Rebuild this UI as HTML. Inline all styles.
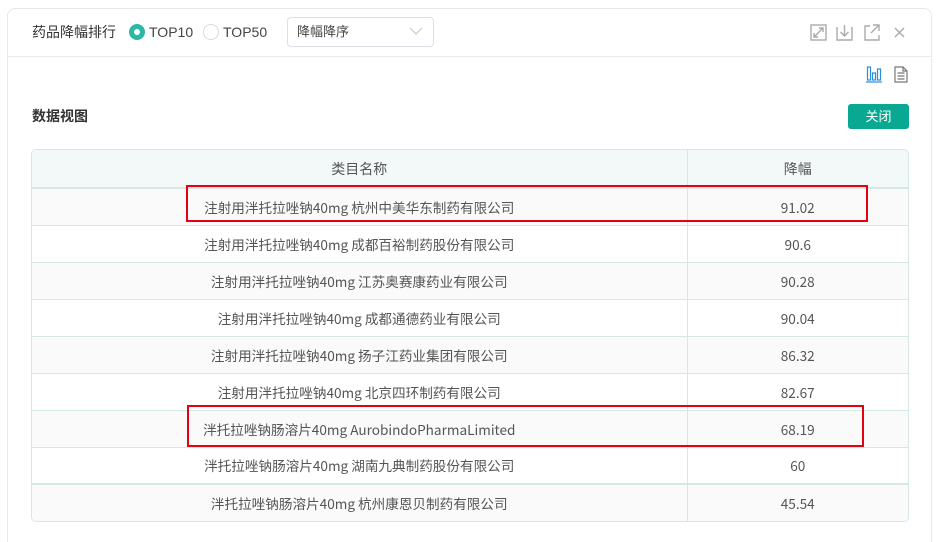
<!DOCTYPE html>
<html><head><meta charset="utf-8"><style>
*{margin:0;padding:0;box-sizing:border-box}
html,body{width:943px;height:542px;overflow:hidden}
body{background:#fff;font-family:"Liberation Sans","Noto Sans CJK SC",sans-serif;color:#555;position:relative}
.panel{position:absolute;left:7px;top:8px;width:925px;height:534px;border:1px solid #e6e8eb;border-bottom:none;border-radius:8px 8px 0 0;background:#fff}
.hdr{position:absolute;left:0;top:0;width:100%;height:48px;border-bottom:1px solid #e8eaec}
.abs{position:absolute}
.t{font-size:14px;color:#333;line-height:18px}
table{border-collapse:collapse;width:100%;font-size:13.6px;color:#555;font-family:"Noto Sans CJK SC",sans-serif}
.tbl{position:absolute;left:31px;top:149px;width:878px;border:1px solid #d5e8e4;border-radius:5px;overflow:hidden}
td,th{height:37px;padding:0;line-height:16px;text-align:center;vertical-align:middle;font-weight:normal;border-bottom:1px solid #d5e8e4}
th{background:#f3f8f8;font-size:14px;height:38px;border-bottom:2px solid #d5e8e4}
td:first-child,th:first-child{border-right:1px solid #d5e8e4;width:655px}
tr.g td{background:#fafafa}
tr.last td{border-bottom:none}
tr.thick td{border-bottom:2px solid #d5e8e4}
.red{position:absolute;border:2px solid #e60012}
</style></head><body>
<div class="panel"><div class="hdr"></div></div>
<div class="abs t" style="left:32px;top:23px">药品降幅排行</div>
<div class="abs" style="left:129px;top:24px;width:16px;height:16px;border-radius:50%;background:#2bb8a6"><div style="position:absolute;left:5px;top:5px;width:6px;height:6px;border-radius:50%;background:#fff"></div></div>
<div class="abs t" style="left:149px;top:23px;color:#444">TOP10</div>
<div class="abs" style="left:203px;top:24px;width:16px;height:16px;border-radius:50%;border:1px solid #d9d9d9"></div>
<div class="abs t" style="left:223px;top:23px;color:#444">TOP50</div>
<div class="abs" style="left:287px;top:17px;width:147px;height:30px;border:1px solid #dcdfe6;border-radius:4px"></div>
<div class="abs" style="left:297px;top:24px;font-size:13px;line-height:16px;color:#444">降幅降序</div>
<svg class="abs" style="left:409px;top:26px" width="14" height="10"><path d="M1 2l6 6 6-6" fill="none" stroke="#c0c4cc" stroke-width="1"/></svg>
<svg class="abs" style="left:810px;top:23px" width="100" height="18" fill="none" stroke="#aaa" stroke-width="1.4">
<rect x="1" y="2" width="15" height="15"/><path d="M4 14l9-9M4 10v4h4M13 9V5H9"/>
<path d="M28 5h-1v12h15V5h-1M34.5 2v11M30.5 9l4 4 4-4"/>
<path d="M60 3h-5v14h14v-5M63 2h6v6M69 2l-8 8"/>
<path d="M85 5l9 9M94 5l-9 9"/>
</svg>
<svg class="abs" style="left:866px;top:65px" width="16" height="18" fill="none" stroke="#2d8cd8" stroke-width="1.2"><rect x="1.5" y="2" width="3" height="13"/><rect x="6.5" y="8" width="3" height="7"/><rect x="11.5" y="4" width="3" height="11"/><path d="M0 17h16"/></svg>
<svg class="abs" style="left:893px;top:66px" width="16" height="17" fill="none" stroke="#777" stroke-width="1.2"><path d="M2 1h8l4 4v11H2z M10 1v4h4 M4.5 7h7M4.5 10h7M4.5 13h7"/></svg>
<div class="abs" style="left:32px;top:107px;font-size:14px;line-height:18px;font-weight:bold;color:#333">数据视图</div>
<div class="abs" style="left:848px;top:104px;width:61px;height:25px;background:#08a892;border-radius:3px;color:#fff;font-size:13px;text-align:center;line-height:25px">关闭</div>
<div class="tbl"><table>
<tr><th>类目名称</th><th>降幅</th></tr>
<tr class="g"><td>注射用泮托拉唑钠40mg 杭州中美华东制药有限公司</td><td>91.02</td></tr>
<tr><td>注射用泮托拉唑钠40mg 成都百裕制药股份有限公司</td><td>90.6</td></tr>
<tr class="g"><td>注射用泮托拉唑钠40mg 江苏奥赛康药业有限公司</td><td>90.28</td></tr>
<tr><td>注射用泮托拉唑钠40mg 成都通德药业有限公司</td><td>90.04</td></tr>
<tr class="g"><td>注射用泮托拉唑钠40mg 扬子江药业集团有限公司</td><td>86.32</td></tr>
<tr><td>注射用泮托拉唑钠40mg 北京四环制药有限公司</td><td>82.67</td></tr>
<tr class="g"><td>泮托拉唑钠肠溶片40mg AurobindoPharmaLimited</td><td>68.19</td></tr>
<tr class="thick"><td>泮托拉唑钠肠溶片40mg 湖南九典制药股份有限公司</td><td>60</td></tr>
<tr class="g last"><td>泮托拉唑钠肠溶片40mg 杭州康恩贝制药有限公司</td><td>45.54</td></tr>
</table></div>
<div class="red" style="left:186px;top:185px;width:682px;height:37px"></div>
<div class="red" style="left:187px;top:405px;width:677px;height:42px"></div>
</body></html>
